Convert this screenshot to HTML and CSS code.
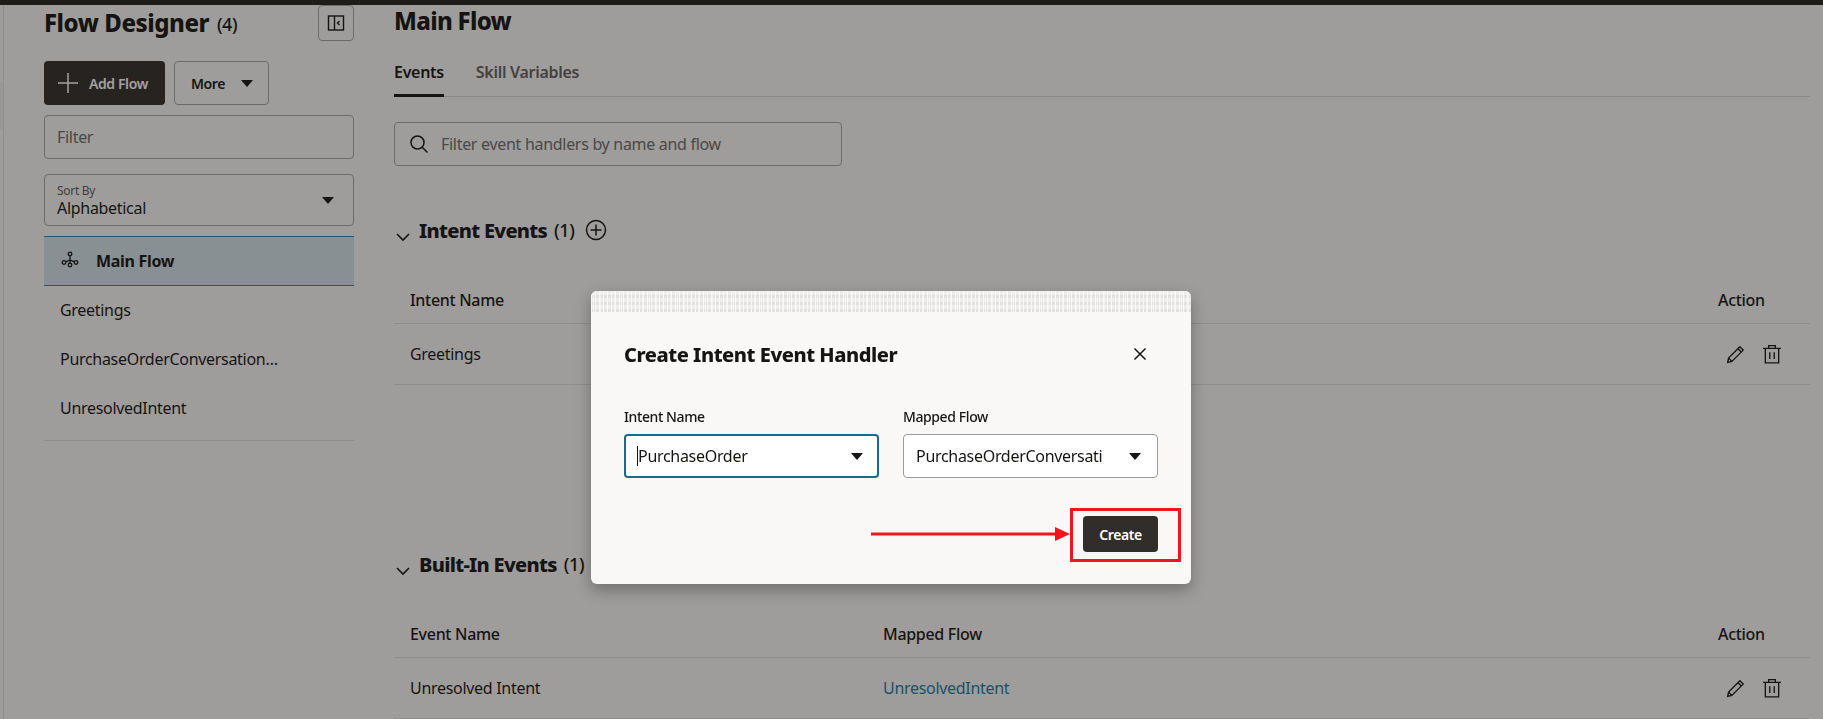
FILE: index.html
```html
<!DOCTYPE html>
<html>
<head>
    <title>Flow Designer</title>
    <link rel="stylesheet" href="styles.css">
</head>
<body>
    <div class="topbar"></div>
    <div class="page">
        <div class="rail"><div class="rail-block"></div></div>

        <aside class="sidebar">
            <div class="side-head">
                <h2>Flow Designer <span class="count">(4)</span></h2>
                <button class="collapse">
                    <svg width="18" height="18" viewBox="0 0 18 18" fill="none" stroke="#161513" stroke-width="1.4"><rect x="1.5" y="2" width="15" height="14"/><path d="M7.5 2v14"/><path d="M12.5 7l-2 2 2 2"/></svg>
                </button>
            </div>
            <div class="side-actions">
                <button class="btn-dark">
                    <svg width="22" height="22" viewBox="0 0 22 22" stroke="#fff" stroke-width="1.5"><path d="M11 1v20M1 11h20"/></svg>
                    <span>Add Flow</span>
                </button>
                <button class="btn-more">More <span class="caret"></span></button>
            </div>
            <div class="field filter">Filter</div>
            <div class="field sort">
                <div>
                    <div class="sort-label">Sort By</div>
                    <div class="sort-value">Alphabetical</div>
                </div>
                <span class="caret"></span>
            </div>
            <div class="flow-item selected">
                <svg class="tree" width="18" height="18" viewBox="0 0 18 18" fill="none" stroke="#161513" stroke-width="1.3"><circle cx="9" cy="3" r="1.8"/><circle cx="3" cy="11.5" r="1.8"/><circle cx="9" cy="14" r="1.8"/><circle cx="15" cy="11.5" r="1.8"/><path d="M9 4.8v7.4M4.7 10.8L9 9l4.3 1.8"/></svg>
                <span>Main Flow</span>
            </div>
            <div class="flow-item">Greetings</div>
            <div class="flow-item">PurchaseOrderConversation…</div>
            <div class="flow-item last">UnresolvedIntent</div>
        </aside>

        <main class="content">
            <h1>Main Flow</h1>
            <div class="tabs">
                <div class="tab active">Events</div>
                <div class="tab">Skill Variables</div>
            </div>
            <div class="search">
                <svg width="20" height="20" viewBox="0 0 20 20" fill="none" stroke="#161513" stroke-width="1.5"><circle cx="8.5" cy="8.5" r="6.5"/><path d="M13.2 13.2l5.3 5.3"/></svg>
                <span>Filter event handlers by name and flow</span>
            </div>

            <div class="section-head first">
                <svg class="chevron" width="16" height="10" viewBox="0 0 16 10" fill="none" stroke="#161513" stroke-width="1.6"><path d="M2 2l6 6 6-6"/></svg>
                <h3>Intent Events</h3>
                <span class="count">(1)</span>
                <svg class="plus" width="22" height="22" viewBox="0 0 22 22" fill="none" stroke="#161513" stroke-width="1.5"><circle cx="11" cy="11" r="9.5"/><path d="M11 5.5v11M5.5 11h11"/></svg>
            </div>
            <div class="row head">
                <div>Intent Name</div>
                <div></div>
                <div>Action</div>
            </div>
            <div class="row">
                <div>Greetings</div>
                <div></div>
                <div class="actions">
                    <svg width="20" height="20" viewBox="0 0 18 18" fill="none" stroke="#161513" stroke-width="1.2"><path d="M1.5 16.5l.8-3.8L12.5 2.5l3 3L5.3 15.7z"/><path d="M10.8 4.2l3 3M2.3 12.7l3 3"/></svg>
                    <svg width="20" height="20" viewBox="0 0 18 18" fill="none" stroke="#161513" stroke-width="1.2"><path d="M1 4h16M6 4V1.5h6V4M3 4v13h12V4"/><path d="M7 7.5v6M11 7.5v6"/></svg>
                </div>
            </div>

            <div class="section-head second">
                <svg class="chevron" width="16" height="10" viewBox="0 0 16 10" fill="none" stroke="#161513" stroke-width="1.6"><path d="M2 2l6 6 6-6"/></svg>
                <h3>Built-In Events</h3>
                <span class="count">(1)</span>
            </div>
            <div class="row head">
                <div>Event Name</div>
                <div>Mapped Flow</div>
                <div>Action</div>
            </div>
            <div class="row">
                <div>Unresolved Intent</div>
                <div class="link">UnresolvedIntent</div>
                <div class="actions">
                    <svg width="20" height="20" viewBox="0 0 18 18" fill="none" stroke="#161513" stroke-width="1.2"><path d="M1.5 16.5l.8-3.8L12.5 2.5l3 3L5.3 15.7z"/><path d="M10.8 4.2l3 3M2.3 12.7l3 3"/></svg>
                    <svg width="20" height="20" viewBox="0 0 18 18" fill="none" stroke="#161513" stroke-width="1.2"><path d="M1 4h16M6 4V1.5h6V4M3 4v13h12V4"/><path d="M7 7.5v6M11 7.5v6"/></svg>
                </div>
            </div>
        </main>
    </div>

    <div class="scrim"></div>

    <div class="dialog">
        <div class="dialog-strip"></div>
        <div class="dialog-head">
            <h2>Create Intent Event Handler</h2>
            <svg width="14" height="14" viewBox="0 0 14 14" stroke="#161513" stroke-width="1.5"><path d="M1.5 1.5l11 11M12.5 1.5l-11 11"/></svg>
        </div>
        <div class="dialog-form">
            <div>
                <label>Intent Name</label>
                <div class="select focused">
                    <span class="select-text"><span class="cursor"></span>PurchaseOrder</span>
                    <span class="caret"></span>
                </div>
            </div>
            <div>
                <label>Mapped Flow</label>
                <div class="select">
                    <span class="select-text">PurchaseOrderConversationFlow</span>
                    <span class="caret"></span>
                </div>
            </div>
        </div>
        <div class="dialog-foot">
            <button class="btn-create">Create</button>
        </div>
    </div>

    <div class="callout-box"></div>
    <svg class="callout-arrow" width="199" height="16" viewBox="0 0 199 16"><path d="M0 8h186" stroke="#f5141c" stroke-width="3"/><path d="M184 1l15 7-15 7z" fill="#f5141c"/></svg>
</body>
</html>
```

FILE: styles.css
```css
* {
    box-sizing: border-box;
}

html, body {
    height: 719px;
    overflow: hidden;
}

body {
    margin: 0;
    font-family: "Noto Sans", Arial, sans-serif;
    font-size: 16px;
    letter-spacing: -0.3px;
    color: #161513;
    background-color: #f9f8f5;
}

button {
    font-family: inherit;
    letter-spacing: -0.4px;
    cursor: pointer;
}

h1, h2, h3 {
    margin: 0;
}

.topbar {
    height: 5px;
    background-color: #26231f;
}

.page {
    display: flex;
    height: 714px;
}

.rail {
    width: 4px;
    border-right: 1px solid #e2e0de;
}

.rail-block {
    height: 48px;
    margin-top: 76px;
    background-color: #f1efed;
}

.caret {
    display: inline-block;
    width: 0;
    height: 0;
    border-left: 6.5px solid transparent;
    border-right: 6.5px solid transparent;
    border-top: 7px solid #161513;
}

/* sidebar */
.sidebar {
    width: 310px;
    margin-left: 40px;
    flex-shrink: 0;
}

.side-head {
    display: flex;
    justify-content: space-between;
    align-items: center;
    height: 36px;
}

.side-head h2 {
    font-size: 24px;
    font-weight: 800;
    letter-spacing: -0.45px;
    padding-bottom: 2px;
}

.count {
    font-size: 18px;
    font-weight: 500;
    margin-left: 2px;
    vertical-align: 1px;
}

.collapse {
    width: 36px;
    height: 36px;
    padding: 0;
    display: flex;
    align-items: center;
    justify-content: center;
    background: none;
    border: 1px solid #a8a6a4;
    border-radius: 4px;
}

.side-actions {
    display: flex;
    gap: 9px;
    margin-top: 20px;
}

.btn-dark {
    width: 121px;
    height: 44px;
    padding: 0 0 0 13px;
    display: flex;
    align-items: center;
    gap: 10px;
    background-color: #312d2a;
    color: #fff;
    border: none;
    border-radius: 4px;
    font-size: 14px;
    font-weight: 600;
}

.btn-more {
    width: 95px;
    height: 44px;
    padding: 0 0 0 16px;
    display: flex;
    align-items: center;
    gap: 16px;
    background: none;
    color: #161513;
    border: 1px solid #a8a6a4;
    border-radius: 4px;
    font-size: 14px;
    font-weight: 600;
}

.field {
    border: 1px solid #a8a6a4;
    border-radius: 4px;
    padding: 0 12px;
    background-color: rgba(255, 255, 255, 0.08);
}

.filter {
    height: 44px;
    margin-top: 10px;
    line-height: 42px;
    color: #6f6c69;
}

.sort {
    height: 52px;
    margin-top: 15px;
    display: flex;
    justify-content: space-between;
    align-items: center;
    padding-right: 19px;
}

.sort-label {
    font-size: 12px;
    line-height: 15px;
    color: #5f5c59;
}

.sort-value {
    line-height: 20px;
}

.flow-item {
    height: 49px;
    padding: 0 0 2px 16px;
    display: flex;
    align-items: center;
}

.flow-item.selected {
    height: 50px;
    margin-top: 10px;
    gap: 17px;
    padding: 0 0 0 17px;
    font-weight: 700;
    background-color: #d4e3e8;
    border-top: 1px solid #2f85a3;
    border-bottom: 1px solid #2f85a3;
}

.tree {
    margin-top: -3px;
}

.flow-item.last {
    height: 57px;
    padding-bottom: 8px;
    border-bottom: 1px solid #e2e0de;
}

/* main column */
.content {
    width: 1416px;
    margin-left: 40px;
    flex-shrink: 0;
}

.content h1 {
    font-size: 24px;
    font-weight: 800;
    letter-spacing: -0.7px;
    line-height: 32px;
}

.tabs {
    display: flex;
    gap: 32px;
    height: 60px;
    border-bottom: 1px solid #d9d7d5;
}

.tab {
    padding-top: 24px;
    font-weight: 600;
    color: #63605d;
}

.tab.active {
    color: #161513;
    border-bottom: 3px solid #161513;
    height: 60px;
}

.search {
    display: flex;
    align-items: center;
    gap: 12px;
    width: 448px;
    height: 44px;
    margin-top: 25px;
    padding-left: 14px;
    border: 1px solid #a8a6a4;
    border-radius: 4px;
    color: #6f6c69;
}

.section-head {
    display: flex;
    align-items: center;
    height: 30px;
}

.section-head.first {
    margin-top: 49px;
}

.section-head.second {
    margin-top: 164px;
}

.section-head h3 {
    font-size: 20px;
    font-weight: 800;
    letter-spacing: -0.7px;
}

.section-head .count {
    margin-left: 7px;
}

.chevron {
    margin: 13px 8px 0 1px;
}

.plus {
    margin-left: 10px;
}

.row {
    display: grid;
    grid-template-columns: 473px 835px 92px;
    align-items: center;
    height: 61px;
    padding-left: 16px;
    border-bottom: 1px solid #e2e0de;
}

.row.head {
    height: 47px;
    margin-top: 32px;
    font-weight: 500;
}

.link {
    color: #1d7a9c;
}

.actions {
    display: flex;
    gap: 16px;
    padding-left: 8px;
}

/* dialog */
.scrim {
    position: fixed;
    inset: 0;
    background-color: rgba(22, 21, 19, 0.4);
}

.dialog {
    position: fixed;
    left: 591px;
    top: 291px;
    width: 600px;
    height: 293px;
    background-color: #f9f8f6;
    border-radius: 6px;
    overflow: hidden;
    box-shadow: 0 6px 16px rgba(0, 0, 0, 0.3);
}

.dialog-strip {
    height: 21px;
    background-color: #eeedeb;
    background-image:
        repeating-linear-gradient(90deg, rgba(255, 255, 255, 0.75) 0 1px, transparent 1px 4px),
        repeating-linear-gradient(90deg, transparent 0 2px, rgba(255, 255, 255, 0.5) 2px 3px, transparent 3px 7px),
        repeating-linear-gradient(0deg, rgba(205, 203, 200, 0.35) 0 3px, transparent 3px 7px);
}

.dialog-head {
    display: flex;
    justify-content: space-between;
    align-items: center;
    height: 30px;
    margin-top: 27px;
    padding: 0 44px 0 33px;
}

.dialog-head h2 {
    font-size: 20px;
    font-weight: 800;
    letter-spacing: -0.45px;
}

.dialog-form {
    display: grid;
    grid-template-columns: 255px 255px;
    gap: 24px;
    padding: 0 33px;
    margin-top: 38px;
}

.dialog-form label {
    display: block;
    font-size: 14px;
    font-weight: 500;
    letter-spacing: -0.4px;
    line-height: 20px;
    margin-bottom: 7px;
}

.select {
    display: flex;
    align-items: center;
    justify-content: space-between;
    height: 44px;
    padding: 0 16px 0 12px;
    background-color: #fff;
    border: 1px solid #9e9c9a;
    border-radius: 4px;
}

.select.focused {
    border: 2px solid #176b8c;
    padding: 0 14px 0 11px;
}

.select-text {
    display: block;
    width: 186px;
    overflow: hidden;
    white-space: nowrap;
}

.cursor {
    display: inline-block;
    width: 1px;
    height: 20px;
    vertical-align: -4px;
    background-color: #161513;
}

.dialog-foot {
    display: flex;
    justify-content: flex-end;
    padding: 0 33px;
    margin-top: 38px;
}

.btn-create {
    width: 75px;
    height: 36px;
    background-color: #312d2a;
    color: #fff;
    border: none;
    border-radius: 4px;
    font-size: 14px;
    font-weight: 600;
}

/* red annotation */
.callout-box {
    position: fixed;
    left: 1070px;
    top: 508px;
    width: 111px;
    height: 54px;
    border: 3px solid #f5141c;
}

.callout-arrow {
    position: fixed;
    left: 871px;
    top: 526px;
}
```
